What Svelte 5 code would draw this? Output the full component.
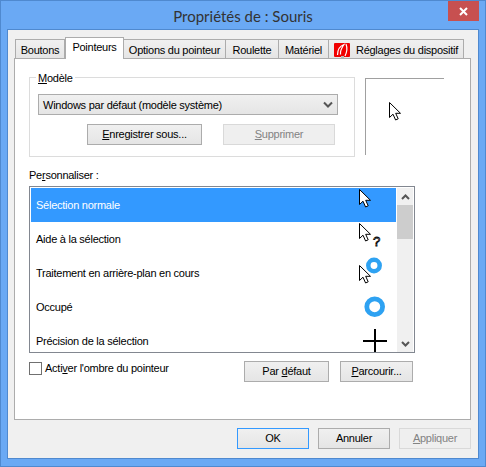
<script>
  const tabs = ["Boutons", "Pointeurs", "Options du pointeur", "Roulette", "Matériel", "Réglages du dispositif"];
  const rows = [
    {label: "Sélection normale", icon: "arrow"},
    {label: "Aide à la sélection", icon: "help"},
    {label: "Traitement en arrière-plan en cours", icon: "working"},
    {label: "Occupé", icon: "busy"},
    {label: "Précision de la sélection", icon: "cross"}
  ];
  const arrow = "M.5 .5V15.5L4 12.2L6.6 18L9.2 16.8L6.7 11.3H11.5Z";
</script>

<div class="window">
  <header class="titlebar">
    <span></span>
    <h1>Propriétés de : Souris</h1>
    <button class="close" aria-label="Fermer">
      <svg width="9" height="9" viewBox="0 0 9 9"><path d="M1 1L8 8M8 1L1 8" stroke="#fff" stroke-width="2"/></svg>
    </button>
  </header>

  <div class="client">
    <nav class="tabs">
      {#each tabs as tab, i}
        <div class="tab" class:active={i == 1}>
          {#if i == 5}
            <svg class="brand" width="16" height="16" viewBox="0 0 16 16">
              <rect x="0" y="1" width="16" height="14" rx="1" fill="#f00000"/>
              <path d="M3.5 13C3.5 8 6 4 10 2.5C7.5 6 6 9 6.5 12.5M12 2C13.5 6 13 10 11 14" fill="none" stroke="#fff" stroke-width="1.2"/>
              <rect x="7" y="14" width="3" height="2" fill="#bbb"/>
            </svg>
          {/if}
          <span>{tab}</span>
        </div>
      {/each}
    </nav>

    <section class="page">
      <div class="top">
        <div class="group">
          <span class="legend"><u>M</u>odèle</span>
          <div class="select">
            <span>Windows par défaut (modèle système)</span>
            <svg width="10" height="7" viewBox="0 0 10 7"><path d="M1 1.5L5 5.5L9 1.5" fill="none" stroke="#555" stroke-width="2"/></svg>
          </div>
          <div class="group-btns">
            <button class="btn save"><u>E</u>nregistrer sous...</button>
            <button class="btn del" disabled><u>S</u>upprimer</button>
          </div>
        </div>
        <div class="preview">
          <svg width="13" height="20" viewBox="0 0 13 20"><path d={arrow} fill="#fff" stroke="#000"/></svg>
        </div>
      </div>

      <div class="label">Pe<u>r</u>sonnaliser :</div>
      <div class="list">
        <ul>
          {#each rows as row, i}
            <li class:selected={i == 0}>
              <span>{row.label}</span>
              <svg class="cur" width="32" height="32" viewBox="0 0 32 32">
                {#if row.icon == "arrow"}
                  <path transform="translate(5 0)" d={arrow} fill="#fff" stroke="#000"/>
                {:else if row.icon == "help"}
                  <path transform="translate(5 0)" d={arrow} fill="#fff" stroke="#000"/>
                  <text x="19" y="23" class="q">?</text>
                {:else if row.icon == "working"}
                  <path transform="translate(5 8)" d={arrow} fill="#fff" stroke="#000"/>
                  <circle cx="20" cy="8.5" r="5.7" fill="none" stroke="#2ea2f2" stroke-width="4.5"/>
                {:else if row.icon == "busy"}
                  <circle cx="20.7" cy="15.7" r="7.9" fill="none" stroke="#2ea2f2" stroke-width="4.8"/>
                {:else}
                  <path d="M9 16H33M21 4V28" stroke="#000" stroke-width="2" fill="none"/>
                {/if}
              </svg>
            </li>
          {/each}
        </ul>
        <div class="scrollbar">
          <div class="arr"><svg width="9" height="6" viewBox="0 0 9 6"><path d="M1 5L4.5 1.5L8 5" fill="none" stroke="#555" stroke-width="2"/></svg></div>
          <div class="track"><div class="thumb"></div></div>
          <div class="arr"><svg width="9" height="6" viewBox="0 0 9 6"><path d="M1 1L4.5 4.5L8 1" fill="none" stroke="#555" stroke-width="2"/></svg></div>
        </div>
      </div>

      <div class="under">
        <label class="check"><span class="box"></span><span>Acti<u>v</u>er l'ombre du pointeur</span></label>
        <button class="btn def">Par <u>d</u>éfaut</button>
        <button class="btn browse"><u>P</u>arcourir...</button>
      </div>
    </section>

    <footer class="actions">
      <button class="btn act ok">OK</button>
      <button class="btn act">Annuler</button>
      <button class="btn act" disabled><u>A</u>ppliquer</button>
    </footer>
  </div>
</div>

<style>
  :global(body) {
    margin: 0;
  }
  * {
    box-sizing: border-box;
  }
  .window {
    width: 486px;
    height: 467px;
    display: flex;
    flex-direction: column;
    background: #6aa9f4;
    border: 1px solid #4f89cf;
    font-family: "Liberation Sans", sans-serif;
    font-size: 11px;
    letter-spacing: -0.25px;
    color: #000;
  }
  .titlebar {
    height: 28px;
    display: grid;
    grid-template-columns: 1fr auto 1fr;
    align-items: start;
  }
  h1 {
    margin: 5px 0 0;
    font-family: Lato, sans-serif;
    font-size: 15px;
    line-height: 20px;
    font-weight: 400;
    letter-spacing: 0;
    color: #333;
  }
  .close {
    justify-self: end;
    width: 31px;
    height: 20px;
    margin-right: 6px;
    padding: 0;
    border: 0;
    background: #c75050;
    display: flex;
    align-items: center;
    justify-content: center;
  }
  .client {
    flex: 1;
    margin: 0 6px 7px;
    border: 1px solid #4f89cf;
    background: #f0f0f0;
    display: flex;
    flex-direction: column;
    padding: 7px 7px 0 6px;
  }
  .tabs {
    display: grid;
    grid-template-columns: 50px 59px 102px 53px 50px 135px;
    justify-content: start;
    height: 22px;
    padding-left: 1px;
    position: relative;
    z-index: 1;
    margin-bottom: -1px;
  }
  .tab {
    height: 20px;
    margin-top: 2px;
    padding: 1px 0 0;
    display: flex;
    align-items: center;
    justify-content: center;
    gap: 6px;
    white-space: nowrap;
    border: 1px solid #acacac;
    border-left-width: 0;
    background: linear-gradient(#f0f0f0, #e5e5e5);
  }
  .tab:first-child {
    border-left-width: 1px;
  }
  .tab.active {
    height: 22px;
    margin: 0;
    padding: 0 0 3px;
    border-left-width: 1px;
    border-bottom: 0;
    background: #fff;
  }
  .page {
    height: 362px;
    background: #fff;
    border: 1px solid #acacac;
    padding: 18px 14px 0 14px;
  }
  .top {
    display: flex;
    align-items: flex-start;
    gap: 10px;
  }
  .group {
    position: relative;
    width: 326px;
    height: 80px;
    padding: 16px 16px 0 8px;
    border: 1px solid #dcdcdc;
  }
  .legend {
    position: absolute;
    top: -8px;
    left: 6px;
    padding: 0 2px;
    line-height: 16px;
    background: #fff;
  }
  .select {
    height: 21px;
    width: 300px;
    display: flex;
    align-items: center;
    justify-content: space-between;
    padding: 0 4px;
    background: linear-gradient(#f0f0f0, #e5e5e5);
    border: 1px solid #acacac;
  }
  .group-btns {
    display: flex;
    margin-top: 9px;
    padding-left: 49px;
    gap: 21px;
  }
  .btn {
    height: 21px;
    padding: 0;
    border: 1px solid #acacac;
    background: linear-gradient(#f0f0f0, #e5e5e5);
    font: inherit;
    letter-spacing: inherit;
    color: #000;
    line-height: 17px;
  }
  .btn:disabled {
    border-color: #d9d9d9;
    background: #efefef;
    color: #838383;
  }
  .save {
    width: 115px;
  }
  .del {
    width: 112px;
  }
  .preview {
    width: 79px;
    height: 77px;
    margin-top: 1px;
    border-top: 1px solid #a0a0a0;
    border-left: 1px solid #a0a0a0;
    padding: 23px 0 0 23px;
  }
  .preview svg {
    display: block;
  }
  .label {
    margin-top: 10px;
    line-height: 17px;
  }
  .list {
    width: 386px;
    height: 167px;
    margin-top: 2px;
    padding: 1px 1px 0 1px;
    border: 1px solid #828790;
    display: flex;
  }
  ul {
    flex: 1;
    margin: 0;
    padding: 0;
    list-style: none;
    overflow: hidden;
  }
  li {
    height: 34px;
    padding: 0 10px 0 5px;
    display: flex;
    align-items: center;
    justify-content: space-between;
  }
  li.selected {
    background: #3399ff;
    color: #fff;
  }
  .cur {
    overflow: visible;
    flex: none;
  }
  .q {
    font: 13px "Liberation Sans", sans-serif;
    fill: #fff;
    stroke: #000;
    stroke-width: 0.8;
  }
  .scrollbar {
    width: 16px;
    margin-left: 1px;
    background: #f0f0f0;
    display: flex;
    flex-direction: column;
  }
  .arr {
    height: 17px;
    display: flex;
    align-items: center;
    justify-content: center;
  }
  .track {
    flex: 1;
  }
  .thumb {
    height: 34px;
    background: #cdcdcd;
  }
  .under {
    display: flex;
    align-items: flex-start;
    margin-top: 8px;
  }
  .check {
    display: flex;
    align-items: center;
    gap: 3px;
    width: 215px;
    height: 14px;
  }
  .box {
    width: 13px;
    height: 13px;
    border: 1px solid #707070;
    background: #fff;
  }
  .def {
    width: 85px;
    margin-right: 11px;
  }
  .browse {
    width: 73px;
  }
  .actions {
    display: flex;
    justify-content: flex-end;
    gap: 9px;
    margin-top: 8px;
  }
  .act {
    width: 72px;
  }
  .ok {
    border-color: #3399ff;
  }
</style>
